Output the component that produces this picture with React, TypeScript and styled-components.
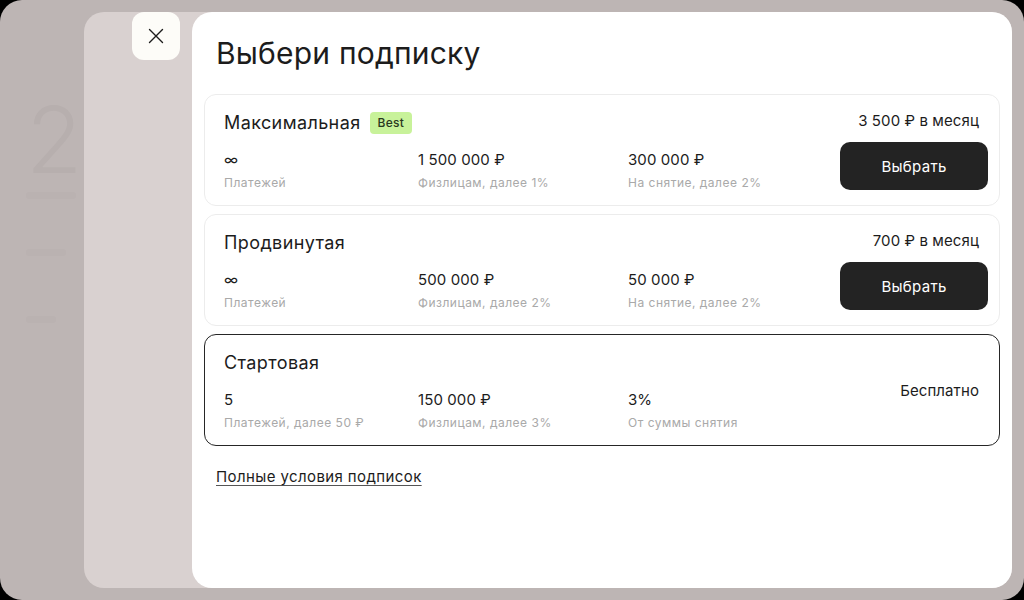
import styled, { createGlobalStyle } from "styled-components";

const GlobalStyle = createGlobalStyle`
  html, body {
    margin: 0;
    padding: 0;
    background: #000;
  }
  body {
    font-family: Inter, "Noto Sans", "Liberation Sans", sans-serif;
    color: #1f1f1f;
    -webkit-font-smoothing: antialiased;
  }
  * {
    box-sizing: border-box;
  }
`;

const Screen = styled.div`
  width: 1024px;
  height: 600px;
  background: #bdb5b4;
  border-radius: 22px;
  overflow: hidden;
  display: flex;
`;

// то, что лежит под затемнением слева
const BackdropColumn = styled.div`
  width: 84px;
  flex-shrink: 0;
  padding: 92px 0 0 26px;
  display: flex;
  flex-direction: column;
  color: #b7afae;
`;

const FaintBig = styled.div`
  font-size: 92px;
  line-height: 96px;
  font-weight: 300;
`;

const FaintLine = styled.div<{ width: number; top: number }>`
  width: ${(props) => props.width}px;
  height: 7px;
  border-radius: 3px;
  background: #bab2b1;
  margin-top: ${(props) => props.top}px;
`;

const Sheet = styled.div`
  flex: 1;
  margin: 12px 12px 12px 0;
  background: #d9d1d0;
  border-radius: 20px;
  display: flex;
  padding-left: 48px;
`;

const CloseButton = styled.button`
  width: 48px;
  height: 48px;
  flex-shrink: 0;
  margin-right: 12px;
  border: none;
  border-radius: 12px;
  background: #fdfcf8;
  display: flex;
  justify-content: center;
  align-items: center;
  padding: 0;
  cursor: pointer;
`;

const Modal = styled.div`
  flex: 1;
  background: #ffffff;
  border-radius: 20px;
  padding: 22px 12px 12px 12px;
  display: flex;
  flex-direction: column;
`;

const Title = styled.h1`
  margin: 0 0 22px 12px;
  font-size: 30px;
  line-height: 38px;
  font-weight: 400;
  letter-spacing: 0.2px;
  color: #1c1c1c;
`;

const CardList = styled.div`
  display: flex;
  flex-direction: column;
  gap: 8px;
`;

const Card = styled.div<{ selected?: boolean }>`
  display: flex;
  border: 1px solid ${(props) => (props.selected ? "#262626" : "#ececec")};
  border-radius: 12px;
  padding: 16px 11px 14px 19px;
`;

const CardMain = styled.div`
  flex: 1;
  display: flex;
  flex-direction: column;
  gap: 16px;
`;

const TitleRow = styled.div`
  display: flex;
  align-items: center;
  gap: 9px;
  height: 24px;
`;

const PlanName = styled.div`
  font-size: 18px;
  line-height: 24px;
  letter-spacing: 0.4px;
  color: #1c1c1c;
`;

const Badge = styled.span`
  background: #c8f29a;
  color: #2a3820;
  font-size: 12px;
  line-height: 22px;
  padding: 0 8px;
  border-radius: 4px;
  font-weight: 500;
  letter-spacing: 0.3px;
`;

const Stats = styled.div`
  display: grid;
  grid-template-columns: 194px 210px auto;
`;

const Stat = styled.div`
  display: flex;
  flex-direction: column;
  gap: 6px;
`;

const StatValue = styled.div`
  font-size: 15px;
  line-height: 18px;
  letter-spacing: 0.1px;
  color: #1c1c1c;
`;

const StatLabel = styled.div`
  font-size: 12px;
  line-height: 16px;
  letter-spacing: 0.5px;
  color: #a9a9a9;
`;

const CardSide = styled.div<{ centered?: boolean }>`
  display: flex;
  flex-direction: column;
  align-items: flex-end;
  justify-content: ${(props) => (props.centered ? "center" : "space-between")};
`;

const Price = styled.div`
  font-size: 15px;
  line-height: 20px;
  padding-right: 9px;
  letter-spacing: 0.1px;
  color: #1c1c1c;
`;

const ChooseButton = styled.button`
  width: 148px;
  height: 48px;
  border: none;
  border-radius: 10px;
  background: #232323;
  color: #ffffff;
  font-family: inherit;
  font-size: 15px;
  letter-spacing: 0.3px;
  margin-bottom: 1px;
  cursor: pointer;
`;

const TermsLink = styled.a`
  margin: 21px 0 0 12px;
  align-self: flex-start;
  font-size: 15px;
  line-height: 20px;
  letter-spacing: 0.4px;
  color: #1c1c1c;
  text-decoration: underline;
  text-underline-offset: 3px;
  text-decoration-thickness: 1px;
  text-decoration-color: #555;
`;

type Plan = {
  name: string;
  best?: boolean;
  price: string;
  selected?: boolean;
  withButton: boolean;
  stats: { value: string; label: string }[];
};

const plans: Plan[] = [
  {
    name: "Максимальная",
    best: true,
    price: "3 500 ₽ в месяц",
    withButton: true,
    stats: [
      { value: "∞", label: "Платежей" },
      { value: "1 500 000 ₽", label: "Физлицам, далее 1%" },
      { value: "300 000 ₽", label: "На снятие, далее 2%" },
    ],
  },
  {
    name: "Продвинутая",
    price: "700 ₽ в месяц",
    withButton: true,
    stats: [
      { value: "∞", label: "Платежей" },
      { value: "500 000 ₽", label: "Физлицам, далее 2%" },
      { value: "50 000 ₽", label: "На снятие, далее 2%" },
    ],
  },
  {
    name: "Стартовая",
    price: "Бесплатно",
    selected: true,
    withButton: false,
    stats: [
      { value: "5", label: "Платежей, далее 50 ₽" },
      { value: "150 000 ₽", label: "Физлицам, далее 3%" },
      { value: "3%", label: "От суммы снятия" },
    ],
  },
];

const CloseIcon = () => (
  <svg width="16" height="16" viewBox="0 0 16 16" fill="none">
    <path d="M1.5 1.5L14.5 14.5M14.5 1.5L1.5 14.5" stroke="#1c1c1c" strokeWidth="1.4" strokeLinecap="round" />
  </svg>
);

const PlanCard = ({ plan }: { plan: Plan }) => (
  <Card selected={plan.selected}>
    <CardMain>
      <TitleRow>
        <PlanName>{plan.name}</PlanName>
        {plan.best && <Badge>Best</Badge>}
      </TitleRow>
      <Stats>
        {plan.stats.map((s) => (
          <Stat key={s.label}>
            <StatValue>{s.value}</StatValue>
            <StatLabel>{s.label}</StatLabel>
          </Stat>
        ))}
      </Stats>
    </CardMain>
    <CardSide centered={!plan.withButton}>
      <Price>{plan.price}</Price>
      {plan.withButton && <ChooseButton>Выбрать</ChooseButton>}
    </CardSide>
  </Card>
);

export default function App() {
  return (
    <>
      <GlobalStyle />
      <Screen>
        <BackdropColumn>
          <FaintBig>2</FaintBig>
          <FaintLine width={50} top={4} />
          <FaintLine width={40} top={50} />
          <FaintLine width={30} top={60} />
        </BackdropColumn>
        <Sheet>
          <CloseButton aria-label="Закрыть">
            <CloseIcon />
          </CloseButton>
          <Modal>
            <Title>Выбери подписку</Title>
            <CardList>
              {plans.map((p) => (
                <PlanCard key={p.name} plan={p} />
              ))}
            </CardList>
            <TermsLink href="#">Полные условия подписок</TermsLink>
          </Modal>
        </Sheet>
      </Screen>
    </>
  );
}
